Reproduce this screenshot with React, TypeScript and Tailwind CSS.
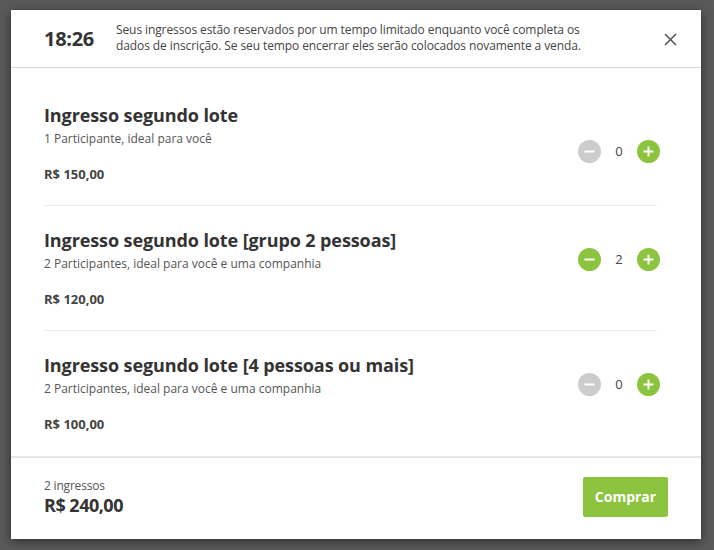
import React from "react";

type Item = { title: string; sub: string; price: string; qty: number; stepTop: string };

const items: Item[] = [
  { title: "Ingresso segundo lote", sub: "1 Participante, ideal para você", price: "R$ 150,00", qty: 0, stepTop: "mt-[37px]" },
  { title: "Ingresso segundo lote [grupo 2 pessoas]", sub: "2 Participantes, ideal para você e uma companhia", price: "R$ 120,00", qty: 2, stepTop: "mt-[20px]" },
  { title: "Ingresso segundo lote [4 pessoas ou mais]", sub: "2 Participantes, ideal para você e uma companhia", price: "R$ 100,00", qty: 0, stepTop: "mt-[20px]" },
];

function Circle({ kind, active }: { kind: "minus" | "plus"; active: boolean }) {
  return (
    <div className={`w-[23px] h-[23px] rounded-full flex items-center justify-center ${active ? "bg-[#8cc43f]" : "bg-[#cccccc]"}`}>
      <svg width="13" height="13" viewBox="0 0 13 13">
        <line x1="1.5" y1="6.5" x2="11.5" y2="6.5" stroke="white" strokeWidth="2" />
        {kind === "plus" && <line x1="6.5" y1="1.5" x2="6.5" y2="11.5" stroke="white" strokeWidth="2" />}
      </svg>
    </div>
  );
}

export default function App() {
  return (
    <div className="w-[714px] h-[550px] bg-[#5a5a5a] pt-[10px] pl-[11px]" style={{ fontFamily: '"Open Sans", "Noto Sans", sans-serif' }}>
      <div className="w-[690px] h-[529px] bg-white flex flex-col shadow-[0_2px_10px_rgba(0,0,0,0.5)]">
        <div className="h-[58px] flex items-center border-b border-[#d9d9d9] shrink-0">
          <div className="pl-[33px] w-[105px] text-[20px] font-bold text-[#333] tracking-[-0.3px]">18:26</div>
          <div className="text-[12px] leading-[16px] text-[#444] tracking-[-0.1px] mt-[-1px]">
            Seus ingressos estão reservados por um tempo limitado enquanto você completa os<br />
            dados de inscrição. Se seu tempo encerrar eles serão colocados novamente a venda.
          </div>
          <div className="ml-auto mr-[24px] mt-[2px]">
            <svg width="13" height="13" viewBox="0 0 13 13">
              <path d="M1 1L12 12M12 1L1 12" stroke="#555" strokeWidth="1.6" />
            </svg>
          </div>
        </div>
        <div className="flex-1 overflow-hidden pt-[13px]">
          {items.map((it, i) => (
            <div key={i} className={`ml-[33px] mr-[44px] ${i < items.length - 1 ? "border-b border-[#ebebeb]" : ""}`}>
              <div className="flex justify-between pt-[22px] pb-[22px]">
                <div>
                  <div className="text-[18px] leading-[24px] font-bold text-[#333] tracking-[-0.1px]">{it.title}</div>
                  <div className="text-[12px] leading-[16px] text-[#555] mt-[4px]">{it.sub}</div>
                  <div className="text-[13px] leading-[18px] font-bold text-[#444] mt-[18px]">{it.price}</div>
                </div>
                <div className={`flex items-start mr-[-3px] ${it.stepTop}`}>
                  <div className="flex items-center">
                    <Circle kind="minus" active={it.qty > 0} />
                    <div className="w-[36px] text-center text-[13px] text-[#444]">{it.qty}</div>
                    <Circle kind="plus" active={true} />
                  </div>
                </div>
              </div>
            </div>
          ))}
        </div>
        <div className="h-[83px] border-t-2 border-[#e6e6e6] shrink-0 flex items-center pl-[33px] pr-[33px]">
          <div className="mt-[-3px]">
            <div className="text-[12px] leading-[16px] text-[#555] tracking-[-0.2px]">2 ingressos</div>
            <div className="text-[18px] leading-[22px] font-bold text-[#333] tracking-[-0.5px]">R$ 240,00</div>
          </div>
          <button className="ml-auto w-[85px] h-[40px] bg-[#8cc43f] text-white text-[14px] font-bold rounded-[2px] mt-[-4px]">
            Comprar
          </button>
        </div>
      </div>
    </div>
  );
}
